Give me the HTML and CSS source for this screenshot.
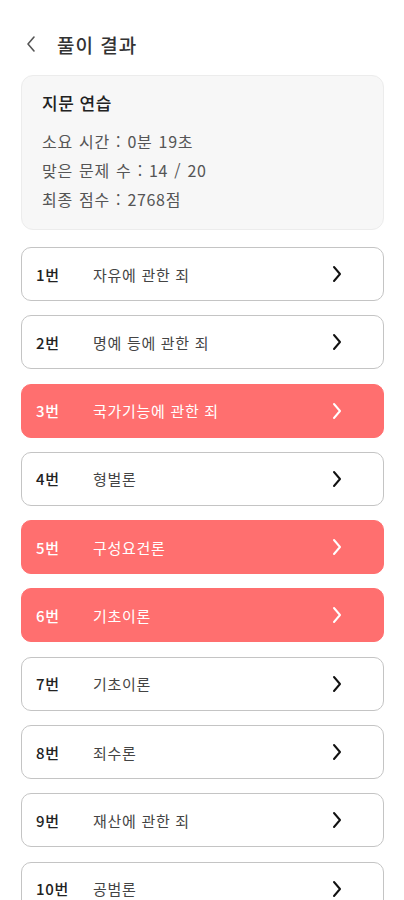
FILE: index.html
```html
<!DOCTYPE html>
<html lang="ko">
<head>
    <meta charset="UTF-8">
    <meta name="viewport" content="width=device-width, initial-scale=1.0">
    <title>풀이 결과</title>
    <link rel="stylesheet" href="styles.css">
</head>
<body>
<div class="page">
    <header class="top-bar">
        <svg class="back-icon" width="12" height="18" viewBox="0 0 12 18">
            <path d="M9 2 L3 9 L9 16" fill="none" stroke="#555" stroke-width="1.6" stroke-linecap="round" stroke-linejoin="round"/>
        </svg>
        <h1>풀이 결과</h1>
    </header>

    <section class="summary">
        <h2>지문 연습</h2>
        <p>소요 시간 : 0분 19초</p>
        <p>맞은 문제 수 : 14 / 20</p>
        <p>최종 점수 : 2768점</p>
    </section>

    <ul class="result-list">
        <li class="result-item"><span class="num">1번</span><span class="topic">자유에 관한 죄</span><svg class="arrow" viewBox="0 0 12 18"><path d="M3 2 L9 9 L3 16"/></svg></li>
        <li class="result-item"><span class="num">2번</span><span class="topic">명예 등에 관한 죄</span><svg class="arrow" viewBox="0 0 12 18"><path d="M3 2 L9 9 L3 16"/></svg></li>
        <li class="result-item wrong"><span class="num">3번</span><span class="topic">국가기능에 관한 죄</span><svg class="arrow" viewBox="0 0 12 18"><path d="M3 2 L9 9 L3 16"/></svg></li>
        <li class="result-item"><span class="num">4번</span><span class="topic">형벌론</span><svg class="arrow" viewBox="0 0 12 18"><path d="M3 2 L9 9 L3 16"/></svg></li>
        <li class="result-item wrong"><span class="num">5번</span><span class="topic">구성요건론</span><svg class="arrow" viewBox="0 0 12 18"><path d="M3 2 L9 9 L3 16"/></svg></li>
        <li class="result-item wrong"><span class="num">6번</span><span class="topic">기초이론</span><svg class="arrow" viewBox="0 0 12 18"><path d="M3 2 L9 9 L3 16"/></svg></li>
        <li class="result-item"><span class="num">7번</span><span class="topic">기초이론</span><svg class="arrow" viewBox="0 0 12 18"><path d="M3 2 L9 9 L3 16"/></svg></li>
        <li class="result-item"><span class="num">8번</span><span class="topic">죄수론</span><svg class="arrow" viewBox="0 0 12 18"><path d="M3 2 L9 9 L3 16"/></svg></li>
        <li class="result-item"><span class="num">9번</span><span class="topic">재산에 관한 죄</span><svg class="arrow" viewBox="0 0 12 18"><path d="M3 2 L9 9 L3 16"/></svg></li>
        <li class="result-item"><span class="num">10번</span><span class="topic">공범론</span><svg class="arrow" viewBox="0 0 12 18"><path d="M3 2 L9 9 L3 16"/></svg></li>
    </ul>
</div>
</body>
</html>
```

FILE: styles.css
```css
:root {
    --wrong-color: #ff6f6f;
    --border-color: #c4c4c4;
    --card-bg: #f7f7f7;
    --text-dark: #222;
    --text-mid: #555;
}

body {
    margin: 0;
    font-family: 'Noto Sans CJK KR', 'Noto Sans', sans-serif;
    background-color: #fff;
    color: var(--text-dark);
    overflow: hidden;
}

.page {
    padding: 0 20px 0 21px;
}

.top-bar {
    display: flex;
    align-items: center;
    height: 44px;
    margin-top: 22px;
}

.back-icon {
    margin-left: 4px;
    margin-right: 20px;
}

.top-bar h1 {
    margin: 0;
    font-size: 19px;
    font-weight: 500;
    letter-spacing: 1px;
    color: #333;
}

.summary {
    margin-top: 9px;
    padding: 13px 20px 11px;
    background-color: var(--card-bg);
    border: 1px solid #ececec;
    border-radius: 12px;
    height: 129px;
}

.summary h2 {
    margin: 0 0 10px;
    font-size: 17px;
    font-weight: 500;
    letter-spacing: 0.5px;
    line-height: 28px;
    color: #222;
}

.summary p {
    margin: 0;
    font-size: 16px;
    letter-spacing: 0.7px;
    word-spacing: 1px;
    line-height: 29px;
    color: var(--text-mid);
}

.result-list {
    list-style: none;
    margin: 17px 0 0;
    padding: 0;
    display: flex;
    flex-direction: column;
    gap: 14.3px;
}

.result-item {
    display: flex;
    align-items: center;
    height: 54px;
    box-sizing: border-box;
    padding: 0 40px 0 14px;
    border: 1px solid var(--border-color);
    border-radius: 10px;
    font-size: 15px;
    letter-spacing: 0.7px;
}

.result-item .num {
    width: 57px;
    font-weight: 500;
    color: var(--text-dark);
}

.result-item .topic {
    flex: 1;
    color: #444;
}

.arrow {
    width: 12px;
    height: 18px;
    fill: none;
    stroke: #111;
    stroke-width: 2;
    stroke-linecap: round;
    stroke-linejoin: round;
}

.result-item.wrong {
    background-color: var(--wrong-color);
    border-color: var(--wrong-color);
}

.result-item.wrong .num,
.result-item.wrong .topic {
    color: #fff;
}

.result-item.wrong .arrow {
    stroke: #fff;
}
```
